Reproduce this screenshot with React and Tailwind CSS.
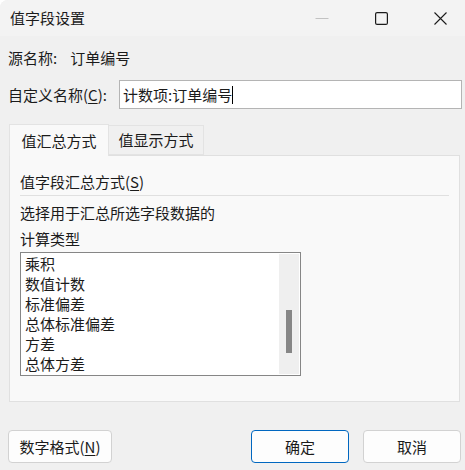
const items = ['乘积', '数值计数', '标准偏差', '总体标准偏差', '方差', '总体方差'];

export default function App() {
    return (
        <div
            className="w-[465px] h-[470px] bg-white overflow-hidden text-[15px] text-[#1b1b1b]"
            style={{ fontFamily: '"Noto Sans CJK SC", "Noto Sans", sans-serif' }}
        >
            <div className="w-full h-full bg-[#f0f0f0] rounded-tl-[8px] flex flex-col">
                {/* Title bar */}
                <div className="h-[36px] shrink-0 bg-[#f3f3f3] rounded-tl-[8px] flex items-center pl-[10px]">
                    <span className="flex-1 leading-5">值字段设置</span>
                    <svg width="14" height="14" viewBox="0 0 14 14" className="mr-[46px]">
                        <line x1="0.5" y1="7.5" x2="13.5" y2="7.5" stroke="#c2c2c2" strokeWidth="1" />
                    </svg>
                    <svg width="13" height="13" viewBox="0 0 13 13" className="mr-[46px]">
                        <rect x="0.6" y="0.6" width="11.8" height="11.8" rx="1.5" fill="none" stroke="#1b1b1b" strokeWidth="1.2" />
                    </svg>
                    <svg width="13" height="13" viewBox="0 0 13 13" className="mr-[18px]">
                        <path d="M0.5 0.5 L12.5 12.5 M12.5 0.5 L0.5 12.5" stroke="#1b1b1b" strokeWidth="1.1" />
                    </svg>
                </div>

                <div className="px-[8px] pt-[12px] flex flex-col">
                    <div className="h-5 leading-5 flex">
                        <span>源名称:</span>
                        <span className="ml-[13px]">订单编号</span>
                    </div>

                    <div className="mt-[12px] flex items-center">
                        <span className="w-[111px] shrink-0 leading-5">
                            自定义名称(<span className="underline underline-offset-2">C</span>):
                        </span>
                        <div className="w-[343px] shrink-0 h-[29px] bg-white border border-[#b4b4b4] flex items-center pl-[3px] leading-5">
                            计数项:订单编号
                            <span className="inline-block w-px h-[18px] bg-black"></span>
                        </div>
                    </div>

                    {/* Tabs */}
                    <div className="mt-[14px] ml-px flex items-end">
                        <div className="w-[100px] shrink-0 h-[32px] bg-[#f9f9f9] border border-b-0 border-[#e3e3e3] flex items-center justify-center leading-5 relative top-px z-10">
                            值汇总方式
                        </div>
                        <div className="w-[95px] shrink-0 h-[30px] bg-[#f0f0f0] border border-l-0 border-[#e3e3e3] flex items-center justify-center leading-5">
                            值显示方式
                        </div>
                    </div>

                    {/* Panel */}
                    <div className="ml-px w-[451px] shrink-0 h-[247px] bg-[#f9f9f9] border border-[#e0e0e0] px-[10px] pt-[16px]">
                        <div className="h-5 leading-5">
                            值字段汇总方式(<span className="underline underline-offset-2">S</span>)
                        </div>
                        <div className="mt-[3px] h-px bg-[#e0e0e0]"></div>
                        <div className="mt-[7px] h-5 leading-5">选择用于汇总所选字段数据的</div>
                        <div className="mt-[6px] h-5 leading-5">计算类型</div>

                        {/* List box */}
                        <div className="mt-[3px] w-[281px] h-[124px] bg-white border border-[#868686] flex p-px">
                            <div className="flex-1 pl-[3px] overflow-hidden">
                                {items.map((item) => (
                                    <div key={item} className="h-5 leading-5">
                                        {item}
                                    </div>
                                ))}
                            </div>
                            <div className="w-[20px] bg-[#efefef] flex justify-center pt-[56px]">
                                <div className="w-[6px] h-[43px] bg-[#868686]"></div>
                            </div>
                        </div>
                    </div>

                    {/* Buttons */}
                    <div className="mt-[28px] flex">
                        <button className="w-[104px] shrink-0 h-[33px] bg-[#fdfdfd] border border-[#d2d2d2] rounded-[4px] leading-5">
                            数字格式(<span className="underline underline-offset-2">N</span>)
                        </button>
                        <button className="ml-[139px] w-[98px] shrink-0 h-[33px] bg-[#fdfdfd] border border-[#0067c0] rounded-[4px] leading-5">
                            确定
                        </button>
                        <button className="ml-[14px] w-[98px] shrink-0 h-[33px] bg-[#fdfdfd] border border-[#d2d2d2] rounded-[4px] leading-5">
                            取消
                        </button>
                    </div>
                </div>
            </div>
        </div>
    );
}
